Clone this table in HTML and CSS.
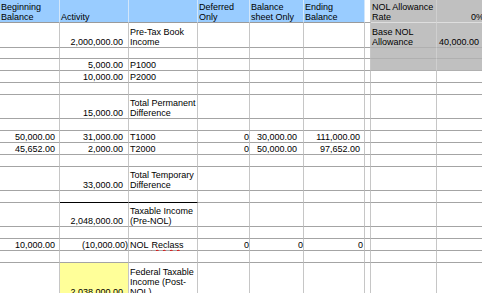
FILE: index.html
```html
<!DOCTYPE html>
<html>
<head>
<meta charset="utf-8">
<link rel="stylesheet" href="styles.css">
</head>
<body>
<div class="sheet">
  <!-- header -->
  <div class="c hd">Beginning<br>Balance</div>
  <div class="c hd">Activity</div>
  <div class="c hd"></div>
  <div class="c hd">Deferred<br>Only</div>
  <div class="c hd">Balance<br>sheet Only</div>
  <div class="c hd">Ending<br>Balance</div>
  <div class="c gap"></div>
  <div class="c gr gr-top">NOL Allowance<br>Rate</div>
  <div class="c gr gr-top r pct">0%</div>

  <!-- Pre-Tax -->
  <div class="c"></div>
  <div class="c r a">2,000,000.00</div>
  <div class="c">Pre-Tax Book<br>Income</div>
  <div class="c"></div>
  <div class="c"></div>
  <div class="c"></div>
  <div class="c gap"></div>
  <div class="c gr">Base NOL<br>Allowance</div>
  <div class="c gr r last">40,000.00</div>

  <div class="c"></div><div class="c"></div><div class="c"></div><div class="c"></div><div class="c"></div><div class="c"></div><div class="c gap"></div><div class="c gr"></div><div class="c gr"></div>

  <div class="c"></div>
  <div class="c r a">5,000.00</div>
  <div class="c">P1000</div>
  <div class="c"></div><div class="c"></div><div class="c"></div><div class="c gap"></div><div class="c gr"></div><div class="c gr"></div>

  <div class="c"></div>
  <div class="c r a">10,000.00</div>
  <div class="c">P2000</div>
  <div class="c"></div><div class="c"></div><div class="c"></div><div class="c gap"></div><div class="c"></div><div class="c"></div>

  <div class="c"></div><div class="c"></div><div class="c"></div><div class="c"></div><div class="c"></div><div class="c"></div><div class="c gap"></div><div class="c"></div><div class="c"></div>

  <div class="c"></div>
  <div class="c r a">15,000.00</div>
  <div class="c">Total Permanent<br>Difference</div>
  <div class="c"></div><div class="c"></div><div class="c"></div><div class="c gap"></div><div class="c"></div><div class="c"></div>

  <div class="c"></div><div class="c"></div><div class="c"></div><div class="c"></div><div class="c"></div><div class="c"></div><div class="c gap"></div><div class="c"></div><div class="c"></div>

  <div class="c r b">50,000.00</div>
  <div class="c r a">31,000.00</div>
  <div class="c">T1000</div>
  <div class="c r">0</div>
  <div class="c r s">30,000.00</div>
  <div class="c r e">111,000.00</div>
  <div class="c gap"></div><div class="c"></div><div class="c"></div>

  <div class="c r b">45,652.00</div>
  <div class="c r a">2,000.00</div>
  <div class="c">T2000</div>
  <div class="c r">0</div>
  <div class="c r s">50,000.00</div>
  <div class="c r e">97,652.00</div>
  <div class="c gap"></div><div class="c"></div><div class="c"></div>

  <div class="c"></div><div class="c"></div><div class="c"></div><div class="c"></div><div class="c"></div><div class="c"></div><div class="c gap"></div><div class="c"></div><div class="c"></div>

  <div class="c"></div>
  <div class="c r a">33,000.00</div>
  <div class="c">Total Temporary<br>Difference</div>
  <div class="c"></div><div class="c"></div><div class="c"></div><div class="c gap"></div><div class="c"></div><div class="c"></div>

  <div class="c"></div><div class="c total-top"></div><div class="c total-top"></div><div class="c"></div><div class="c"></div><div class="c"></div><div class="c gap"></div><div class="c"></div><div class="c"></div>

  <div class="c"></div>
  <div class="c r a">2,048,000.00</div>
  <div class="c">Taxable Income<br>(Pre-NOL)</div>
  <div class="c"></div><div class="c"></div><div class="c"></div><div class="c gap"></div><div class="c"></div><div class="c"></div>

  <div class="c"></div><div class="c"></div><div class="c"></div><div class="c"></div><div class="c"></div><div class="c"></div><div class="c gap"></div><div class="c"></div><div class="c"></div>

  <div class="c r b">10,000.00</div>
  <div class="c r">(10,000.00)</div>
  <div class="c">NOL <span class="sp">Reclass</span></div>
  <div class="c r">0</div>
  <div class="c r">0</div>
  <div class="c r e0">0</div>
  <div class="c gap"></div><div class="c"></div><div class="c"></div>

  <div class="c"></div><div class="c"></div><div class="c"></div><div class="c"></div><div class="c"></div><div class="c"></div><div class="c gap"></div><div class="c"></div><div class="c"></div>

  <div class="c"></div>
  <div class="c r a yl">2,038,000.00</div>
  <div class="c">Federal Taxable<br>Income (Post-<br>NOL)</div>
  <div class="c"></div><div class="c"></div><div class="c"></div><div class="c gap"></div><div class="c"></div><div class="c"></div>
</div>
</body>
</html>
```
FILE: styles.css
```css
html, body {
  margin: 0;
  padding: 0;
  overflow: hidden;
  background: #ffffff;
}

.sheet {
  display: grid;
  grid-template-columns: 60px 69px 69px 52px 54px 61px 6px 66px 50px;
  grid-template-rows: 23px 25px 11px 12px 12px 12px 24px 12px 12px 12px 12px 24px 12px 24px 12px 12px 12px 35px;
  width: 487px;
  font-family: "Liberation Sans", Arial, sans-serif;
  font-size: 9px;
  line-height: 10px;
  color: #000;
}

.c {
  box-sizing: border-box;
  display: flex;
  align-items: flex-end;
  padding-left: 1px;
  border-right: 1px solid #c6c6c6;
  border-bottom: 1px solid #a4a4a4;
  white-space: nowrap;
  overflow: visible;
  background: #ffffff;
}

.r {
  justify-content: flex-end;
  padding-left: 0;
  padding-right: 0;
}

.b { padding-right: 4px; }
.a { padding-right: 5px; }
.s { padding-right: 6px; }
.e { padding-right: 4px; }
.e0 { padding-right: 1px; }
.last { padding-right: 7px; }
.pct { padding-right: 2px; }

.hd {
  background: #99ccff;
  border-right-color: #d2e6fa;
  border-bottom-color: #9a9a9a;
}

.gap {
  background: #ffffff;
}

.gr {
  background: #c0c0c0;
  border-right-color: #cfcfcf;
  border-bottom-color: #b0b0b0;
}

.gr-top {
  border-bottom-color: #dedede;
}

.total-top {
  border-bottom-color: #000000;
}

.yl {
  background: #ffff99;
}

.sp {
  text-decoration: underline wavy #e00000;
  text-decoration-thickness: 1px;
  text-underline-offset: 1px;
  margin-left: 3px;
}
```
